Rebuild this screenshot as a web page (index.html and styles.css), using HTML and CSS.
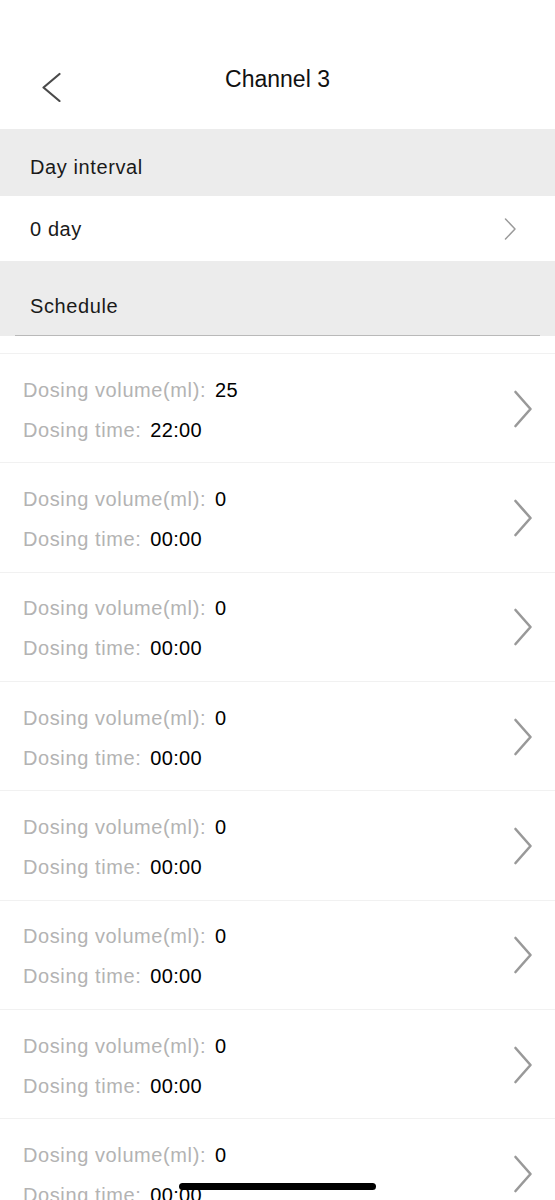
FILE: index.html
```html
<!DOCTYPE html>
<html lang="en">
<head>
<meta charset="utf-8">
<title>Channel 3</title>
<link rel="stylesheet" href="styles.css">
</head>
<body>
<div class="screen">
  <header class="nav">
    <div class="nav-left">
      <svg class="back" width="20" height="30" viewBox="0 0 20 30"><polyline points="18.5,2 2.5,15.5 18.5,29" fill="none" stroke="#4a4a4a" stroke-width="2.2" stroke-linecap="round" stroke-linejoin="round"/></svg>
    </div>
    <h1 class="title">Channel 3</h1>
    <div class="nav-right"></div>
  </header>

  <div class="section-head day-head">Day interval</div>
  <div class="value-row">
    <span>0 day</span>
    <svg class="chev-small" width="14" height="22" viewBox="0 0 14 22"><polyline points="2.5,1 12,11 2.5,21" fill="none" stroke="#9a9a9a" stroke-width="1.5" stroke-linecap="round" stroke-linejoin="round"/></svg>
  </div>

  <div class="section-head schedule-head">
    <div class="head-text">Schedule</div>
    <div class="rule"></div>
  </div>

  <div class="list">
    <div class="row">
      <div class="lines">
        <div class="line"><span class="label">Dosing volume(ml):</span><span class="val">25</span></div>
        <div class="line"><span class="label">Dosing time:</span><span class="val">22:00</span></div>
      </div>
      <svg class="chev" width="22" height="40" viewBox="0 0 22 40"><polyline points="3.5,3 18.5,20 3.5,37" fill="none" stroke="#999999" stroke-width="2.6" stroke-linecap="round" stroke-linejoin="round"/></svg>
    </div>
    <div class="row">
      <div class="lines">
        <div class="line"><span class="label">Dosing volume(ml):</span><span class="val">0</span></div>
        <div class="line"><span class="label">Dosing time:</span><span class="val">00:00</span></div>
      </div>
      <svg class="chev" width="22" height="40" viewBox="0 0 22 40"><polyline points="3.5,3 18.5,20 3.5,37" fill="none" stroke="#999999" stroke-width="2.6" stroke-linecap="round" stroke-linejoin="round"/></svg>
    </div>
    <div class="row">
      <div class="lines">
        <div class="line"><span class="label">Dosing volume(ml):</span><span class="val">0</span></div>
        <div class="line"><span class="label">Dosing time:</span><span class="val">00:00</span></div>
      </div>
      <svg class="chev" width="22" height="40" viewBox="0 0 22 40"><polyline points="3.5,3 18.5,20 3.5,37" fill="none" stroke="#999999" stroke-width="2.6" stroke-linecap="round" stroke-linejoin="round"/></svg>
    </div>
    <div class="row">
      <div class="lines">
        <div class="line"><span class="label">Dosing volume(ml):</span><span class="val">0</span></div>
        <div class="line"><span class="label">Dosing time:</span><span class="val">00:00</span></div>
      </div>
      <svg class="chev" width="22" height="40" viewBox="0 0 22 40"><polyline points="3.5,3 18.5,20 3.5,37" fill="none" stroke="#999999" stroke-width="2.6" stroke-linecap="round" stroke-linejoin="round"/></svg>
    </div>
    <div class="row">
      <div class="lines">
        <div class="line"><span class="label">Dosing volume(ml):</span><span class="val">0</span></div>
        <div class="line"><span class="label">Dosing time:</span><span class="val">00:00</span></div>
      </div>
      <svg class="chev" width="22" height="40" viewBox="0 0 22 40"><polyline points="3.5,3 18.5,20 3.5,37" fill="none" stroke="#999999" stroke-width="2.6" stroke-linecap="round" stroke-linejoin="round"/></svg>
    </div>
    <div class="row">
      <div class="lines">
        <div class="line"><span class="label">Dosing volume(ml):</span><span class="val">0</span></div>
        <div class="line"><span class="label">Dosing time:</span><span class="val">00:00</span></div>
      </div>
      <svg class="chev" width="22" height="40" viewBox="0 0 22 40"><polyline points="3.5,3 18.5,20 3.5,37" fill="none" stroke="#999999" stroke-width="2.6" stroke-linecap="round" stroke-linejoin="round"/></svg>
    </div>
    <div class="row">
      <div class="lines">
        <div class="line"><span class="label">Dosing volume(ml):</span><span class="val">0</span></div>
        <div class="line"><span class="label">Dosing time:</span><span class="val">00:00</span></div>
      </div>
      <svg class="chev" width="22" height="40" viewBox="0 0 22 40"><polyline points="3.5,3 18.5,20 3.5,37" fill="none" stroke="#999999" stroke-width="2.6" stroke-linecap="round" stroke-linejoin="round"/></svg>
    </div>
    <div class="row">
      <div class="lines">
        <div class="line"><span class="label">Dosing volume(ml):</span><span class="val">0</span></div>
        <div class="line"><span class="label">Dosing time:</span><span class="val">00:00</span></div>
      </div>
      <svg class="chev" width="22" height="40" viewBox="0 0 22 40"><polyline points="3.5,3 18.5,20 3.5,37" fill="none" stroke="#999999" stroke-width="2.6" stroke-linecap="round" stroke-linejoin="round"/></svg>
    </div>
  </div>
</div>
<div class="home-indicator"></div>
</body>
</html>
```

FILE: styles.css
```css
* { box-sizing: border-box; }

html, body {
  margin: 0;
  padding: 0;
  background: #ffffff;
}

body {
  font-family: "Liberation Sans", Arial, sans-serif;
  color: #111111;
  width: 555px;
}

.screen {
  display: flex;
  flex-direction: column;
}

/* Navigation bar */
.nav {
  display: grid;
  grid-template-columns: 1fr auto 1fr;
  align-items: start;
  height: 129px;
  padding-top: 65px;
}

.nav-left {
  display: flex;
}

.back {
  margin-left: 41px;
  margin-top: 7px;
  display: block;
}

.title {
  margin: 0;
  font-size: 23px;
  line-height: 28px;
  font-weight: 400;
  color: #111111;
}

/* Section headers */
.section-head {
  background: #ececec;
  font-size: 20px;
  line-height: 24px;
  letter-spacing: 0.6px;
  color: #1a1a1a;
}

.day-head {
  height: 67px;
  padding: 26px 30px 0;
}

.schedule-head {
  height: 75px;
  padding-top: 33px;
}

.head-text {
  padding-left: 30px;
}

.rule {
  margin: 17px 15px 0;
  height: 1px;
  background: #b9b9b9;
}

/* Value row */
.value-row {
  height: 65px;
  display: flex;
  align-items: center;
  justify-content: space-between;
  padding: 1px 38px 0 30px;
  font-size: 20px;
  line-height: 24px;
  letter-spacing: 0.6px;
  color: #1a1a1a;
}

.chev-small { display: block; }

/* Schedule list */
.list {
  padding-top: 17px;
}

.row {
  height: 109.33px;
  border-top: 1px solid #f1f1f1;
  display: flex;
  align-items: center;
  justify-content: space-between;
  padding: 3px 21px 0 23px;
}

.lines {
  display: flex;
  flex-direction: column;
}

.line {
  display: flex;
  gap: 9px;
  font-size: 20px;
  line-height: 40px;
  letter-spacing: 0.6px;
  white-space: nowrap;
}

.label { color: #b3b3b3; }
.val { color: #000000; letter-spacing: 0.3px; }

.chev { display: block; margin-top: -2px; }

/* Home indicator overlays content */
.home-indicator {
  position: fixed;
  left: 179px;
  top: 1183px;
  width: 197px;
  height: 7px;
  border-radius: 4px;
  background: #000000;
}
```
